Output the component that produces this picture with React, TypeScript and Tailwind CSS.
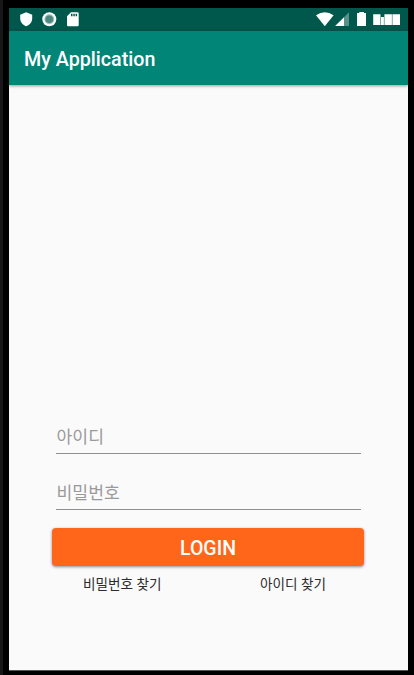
import React from "react";

function StatusBar() {
  return (
    <div className="flex h-[23px] shrink-0 bg-[#00574b]">
      <svg width="399" height="23" viewBox="9 8 399 23" fill="#fff">
        <path d="M26.2 12.3 L32.2 14.7 V18.5 C32.2 22 29.6 25.2 26.2 26.2 C22.8 25.2 20.2 22 20.2 18.5 V14.7 Z" />
        <circle cx="49.3" cy="19.2" r="7" />
        <circle cx="49.3" cy="19.2" r="4.9" fill="#9dbfba" />
        <circle cx="49.3" cy="19.2" r="3.8" fill="#4c887f" />
        <path
          fillRule="evenodd"
          d="M71 12.3 H77.5 Q78.7 12.3 78.7 13.5 V25 Q78.7 26.2 77.5 26.2 H68.2 Q67 26.2 67 25 V16.3 Z M71 13.8 V16.2 H72.5 V13.8 Z M73.3 13.8 V16.2 H74.8 V13.8 Z M75.6 13.8 V16.2 H77.1 V13.8 Z"
        />
        <path d="M316 15.2 Q324.8 9.4 333.6 15.2 L324.8 26.2 Z" />
        <path d="M349 12.3 V26 H335.2 Z" opacity=".35" />
        <path d="M344 17.3 V26 H335.2 Z" />
        <path d="M359.3 12 H364 V13 H366 V26 H357 V13 H359.3 Z" />
        <path d="M373.2 14.3 H380.5 V25 H373.2 Z M381 17 H383.9 V25 H381 Z M384.4 14.3 H391.9 V25 H384.4 Z M392.4 14.3 H400 V25 H392.4 Z" />
      </svg>
    </div>
  );
}

function Field({ label }: { label: string }) {
  return (
    <div className="ml-1 mr-[3px] h-[34px] border-b border-[#8f8f8f] pl-[0.5px] text-[17.2px] leading-[35px] text-[#9a9a9a]">
      {label}
    </div>
  );
}

export default function App() {
  return (
    <div className="h-[675px] w-[414px] border-l-[3px] border-[#171717] bg-black pl-[6px] pt-2 font-['Roboto','Noto_Sans_CJK_KR',sans-serif]">
      <div className="flex h-[663px] w-[399px] flex-col border-b border-[#555] bg-[#fafafa]">
        <StatusBar />
        <header className="flex h-[54px] shrink-0 items-center bg-[#008577] pl-[15px] pt-[3px] text-[19.7px] font-medium text-white shadow-[0_1px_3px_rgba(0,0,0,0.4)]">
          My Application
        </header>
        <main className="mt-[335px] flex flex-col pl-[43px] pr-[44px]">
          <Field label="아이디" />
          <div className="h-[22px]" />
          <Field label="비밀번호" />
          <button className="mt-[18px] h-[38px] rounded-[4px] bg-[#ff661a] pt-0.5 text-[19.5px] font-medium leading-[37px] text-white shadow-[0_1px_3px_rgba(0,0,0,0.45)]">
            LOGIN
          </button>
          <div className="mt-2 flex justify-between pl-[31px] pr-[38px] text-[13.6px] leading-[20px] text-[#2c2c2c]">
            <span>비밀번호 찾기</span>
            <span>아이디 찾기</span>
          </div>
        </main>
      </div>
    </div>
  );
}
